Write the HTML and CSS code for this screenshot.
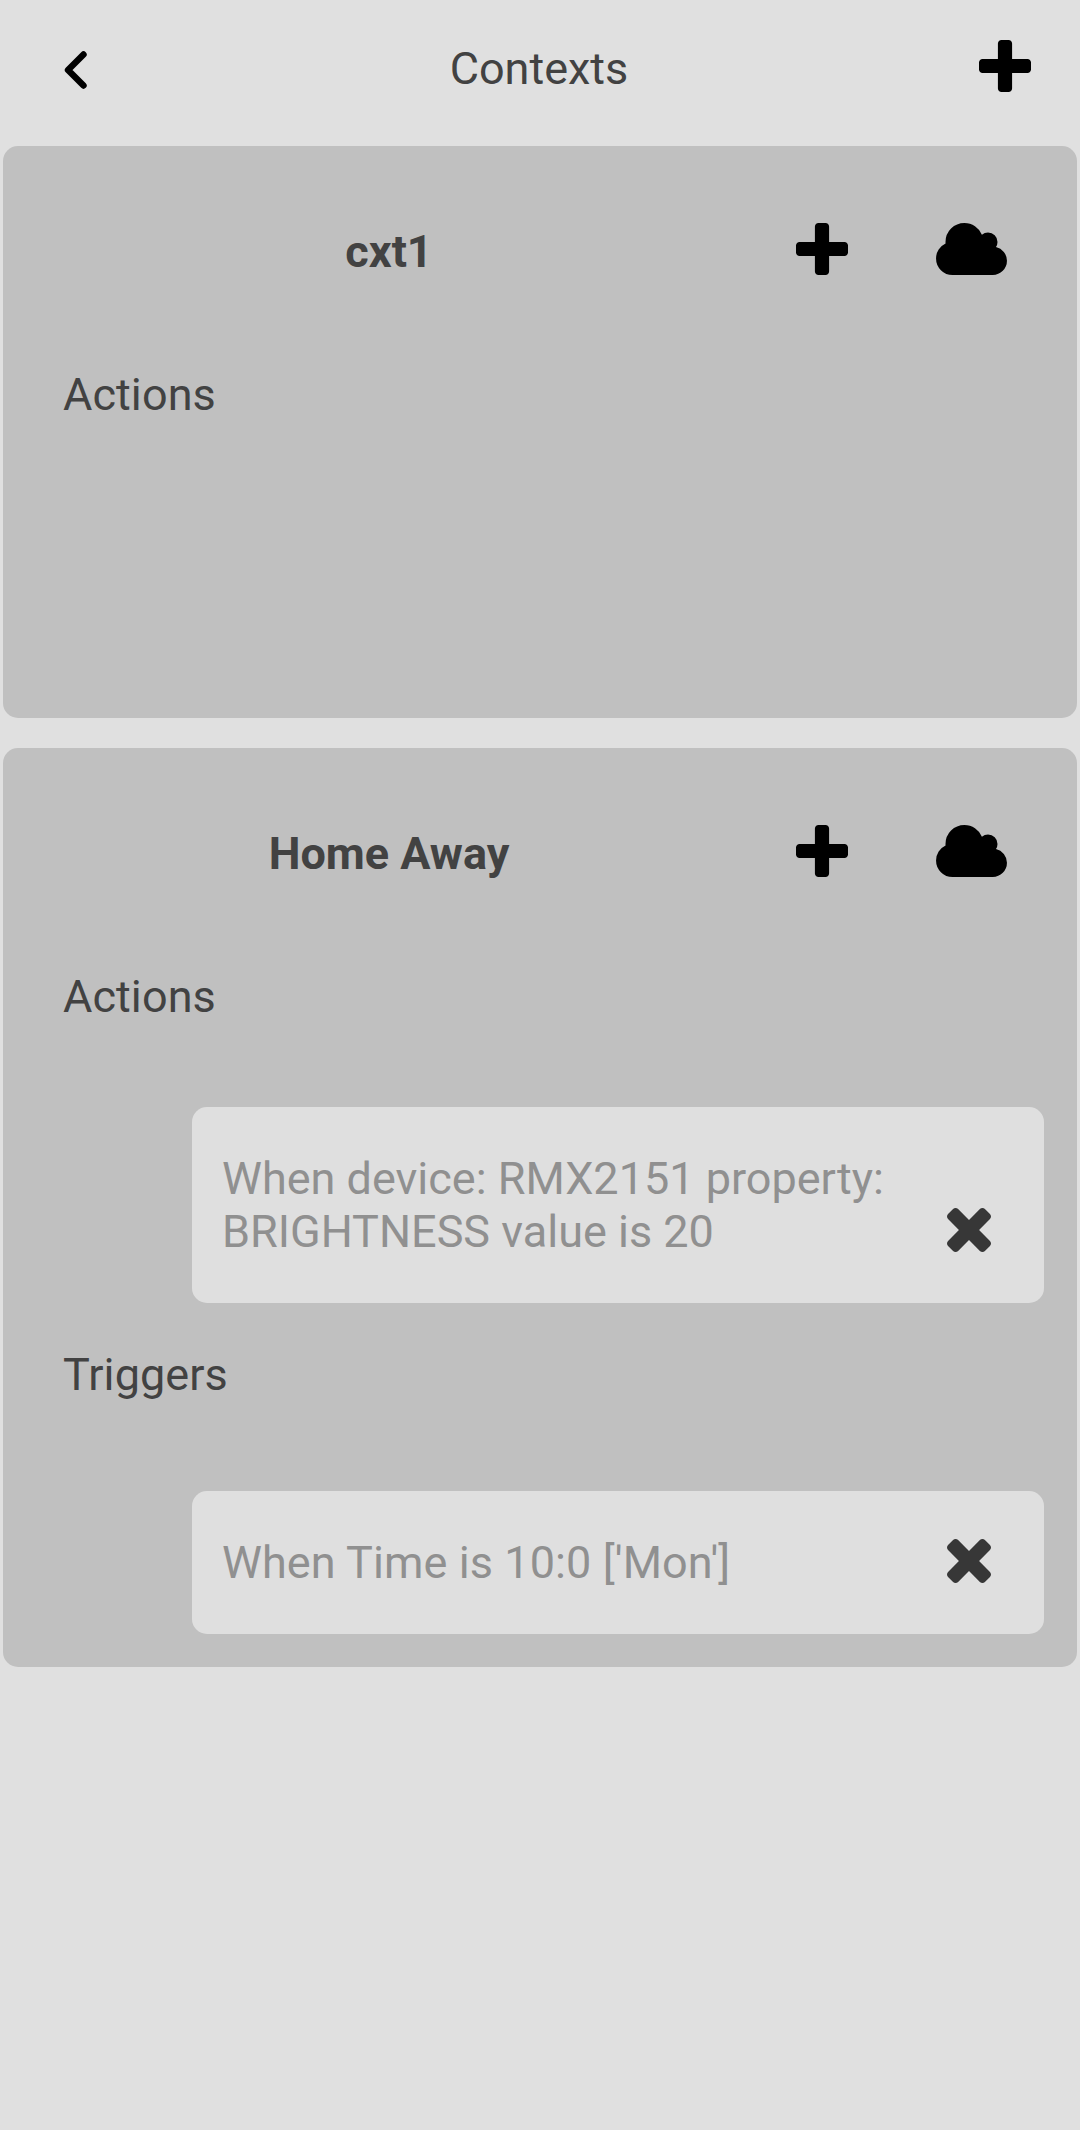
FILE: index.html
```
<!DOCTYPE html>
<html lang="en">
<head>
<meta charset="utf-8">
<title>Contexts</title>
<link rel="stylesheet" href="styles.css">
</head>
<body>
<svg class="defs" aria-hidden="true">
  <symbol id="plus" viewBox="192 128 1408 1408"><path d="M1600 736v192q0 40-28 68t-68 28h-416v416q0 40-28 68t-68 28h-192q-40 0-68-28t-28-68v-416h-416q-40 0-68-28t-28-68v-192q0-40 28-68t68-28h416v-416q0-40 28-68t68-28h192q40 0 68 28t28 68v416h416q40 0 68 28t28 68z"/></symbol>
  <symbol id="cloud" viewBox="64 128 1920 1408"><path d="M1984 1152q0 159-112.500 271.500t-271.500 112.500h-1088q-185 0-316.500-131.500t-131.500-316.500q0-132 71-241.500t187-163.500q-2-28-2-43 0-212 150-362t362-150q158 0 286.500 88t187.500 230q70-62 166-62 106 0 181 75t75 181q0 75-41 138 129 30 213 134.500t84 239.500z"/></symbol>
  <symbol id="times" viewBox="302 366 1188 1188"><path d="M1490 1322q0 40-28 68l-136 136q-28 28-68 28t-68-28l-294-294-294 294q-28 28-68 28t-68-28l-136-136q-28-28-28-68t28-68l294-294-294-294q-28-28-28-68t28-68l136-136q28-28 68-28t68 28l294 294 294-294q28-28 68-28t68 28l136 136q28 28 28 68t-28 68l-294 294 294 294q28 28 28 68z"/></symbol>
</svg>

<header class="topbar">
  <svg class="back" viewBox="0 0 24 40"><path d="M19.500 4.400 4 20 19.500 35.600"/></svg>
  <h1 class="topbar-title">Contexts</h1>
  <svg class="icon-plus"><use href="#plus"/></svg>
</header>

<main class="contexts">
  <section class="context context-empty">
    <div class="context-head">
      <h2 class="context-name">cxt1</h2>
      <svg class="icon-plus"><use href="#plus"/></svg>
      <svg class="icon-cloud"><use href="#cloud"/></svg>
    </div>
    <h3 class="group-label">Actions</h3>
  </section>

  <section class="context">
    <div class="context-head">
      <h2 class="context-name">Home Away</h2>
      <svg class="icon-plus"><use href="#plus"/></svg>
      <svg class="icon-cloud"><use href="#cloud"/></svg>
    </div>
    <h3 class="group-label">Actions</h3>
    <div class="rule rule-action">
      <p class="rule-text">When device: RMX2151 property: BRIGHTNESS value is 20</p>
      <svg class="icon-times"><use href="#times"/></svg>
    </div>
    <h3 class="group-label">Triggers</h3>
    <div class="rule rule-trigger">
      <p class="rule-text">When Time is 10:0 ['Mon']</p>
      <svg class="icon-times"><use href="#times"/></svg>
    </div>
  </section>
</main>
</body>
</html>
```
FILE: styles.css
```
* {
  box-sizing: border-box;
}

body {
  margin: 0;
  min-height: 2130px;
  background: #e0e0e0;
  color: #424242;
  font: 45px/53px Roboto, sans-serif;
}

h1,
h2,
h3,
p {
  margin: 0;
  font-size: inherit;
  font-weight: 400;
}

svg {
  display: block;
  flex: none;
}

.defs {
  display: none;
}

.icon-plus {
  width: 52px;
  height: 52px;
}

.icon-cloud {
  width: 71px;
  height: 52px;
}

.icon-times {
  width: 44px;
  height: 44px;
  margin-bottom: 6px;
  fill: #373737;
}

.topbar {
  display: flex;
  justify-content: space-between;
  height: 146px;
  padding: 39.500px 49px 0 64px;
}

.back {
  width: 24px;
  height: 40px;
  margin: 10.500px 26px 0 0;
  fill: none;
  stroke: #000;
  stroke-width: 6.400;
  stroke-linecap: round;
  stroke-linejoin: round;
}

.topbar-title {
  flex: 1;
  padding-top: 2.500px;
  text-align: center;
}

.topbar .icon-plus {
  margin-left: 15px;
}

.contexts {
  display: flex;
  flex-direction: column;
  gap: 30px;
  padding: 0 3px;
}

.context {
  padding: 76px 33px 33px 60px;
  border-radius: 15px;
  background: #c0c0c0;
}

.context-empty {
  height: 572px;
}

.context-head {
  display: flex;
  margin-bottom: 90px;
  padding-right: 37px;
}

.context-head svg {
  margin-top: 0.500px;
}

.context-name {
  flex: 1;
  padding: 3px 81px 0 0;
  font-weight: 700;
  text-align: center;
}

.context-head .icon-cloud {
  margin-left: 88px;
}

.group-label,
.rule-trigger {
  letter-spacing: 0.08px;
}

.rule {
  display: flex;
  align-items: flex-end;
  justify-content: space-between;
  margin-left: 129px;
  padding: 45px 53px 45px 30px;
  border-radius: 15px;
  background: #dfdfdf;
  color: #909090;
}

.rule-action {
  margin-top: 84px;
  margin-bottom: 45px;
}

.rule-trigger {
  margin-top: 90px;
}

.rule-text {
  width: 700px;
}
```
